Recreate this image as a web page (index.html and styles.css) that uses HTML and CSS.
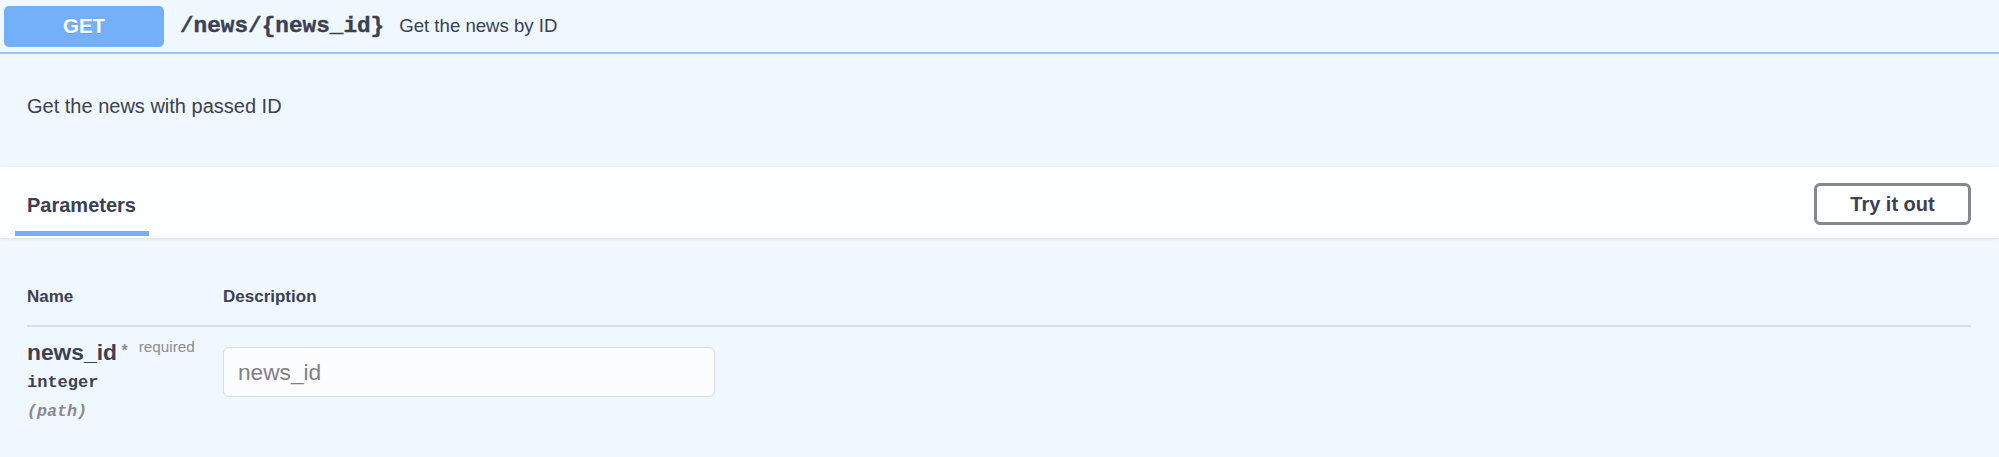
FILE: index.html
```html
<!DOCTYPE html>
<html>
<head>
<meta charset="utf-8">
<link rel="stylesheet" href="styles.css">
</head>
<body>
<div class="opblock">
  <div class="summary">
    <span class="method">GET</span>
    <span class="path">/news/{news_id}</span>
    <span class="summary-desc">Get the news by ID</span>
  </div>
  <div class="description">
    <p>Get the news with passed ID</p>
  </div>
  <div class="section-header">
    <h4 class="tab"><span class="tab-label">Parameters</span></h4>
    <button class="try-btn">Try it out</button>
  </div>
  <div class="params">
    <div class="params-table">
      <div class="th">Name</div>
      <div class="th">Description</div>
      <div class="row-line"></div>
      <div class="param-name-cell">
        <div class="param-name">news_id<span class="star">&nbsp;*</span><span class="req">required</span></div>
        <div class="param-type">integer</div>
        <div class="param-in">(path)</div>
      </div>
      <div class="param-desc-cell">
        <input class="param-input" type="text" placeholder="news_id">
      </div>
    </div>
  </div>
</div>
</body>
</html>
```

FILE: styles.css
```css
html, body {
  margin: 0;
  padding: 0;
}
body {
  background: #eff7ff;
  font-family: "Liberation Sans", Arial, sans-serif;
  color: #3b4151;
  height: 457px;
  overflow: hidden;
}
.opblock {
  background: #eff7ff;
}
.summary {
  display: flex;
  align-items: center;
  height: 52px;
  padding: 0 4px;
  border-bottom: 2px solid #9ac5f8;
}
.method {
  display: flex;
  align-items: center;
  justify-content: center;
  width: 160px;
  height: 41px;
  border-radius: 5px;
  background: #74affa;
  color: #fff;
  font-weight: bold;
  font-size: 20.4px;
  text-shadow: 0 1px 0 rgba(0, 0, 0, 0.1);
}
.path {
  margin-left: 16px;
  font-family: "Liberation Mono", "Courier New", monospace;
  font-weight: bold;
  font-size: 22.7px;
  color: #3b4151;
  -webkit-text-stroke: 0.4px #3b4151;
}
.summary-desc {
  margin-left: 15px;
  font-size: 18.6px;
  color: #3b4151;
}
.description {
  padding: 40px 27px 49px;
}
.description p {
  margin: 0;
  font-size: 20px;
  line-height: 24px;
}
.section-header {
  display: flex;
  align-items: flex-start;
  height: 71px;
  padding: 0 28px 0 27px;
  background: rgba(255, 255, 255, 0.8);
  box-shadow: 0 1px 3px rgba(0, 0, 0, 0.1);
  box-sizing: border-box;
}
.tab {
  margin: 26px 0 0;
  font-size: 20px;
  line-height: 24px;
  font-weight: bold;
}
.tab-label {
  position: relative;
}
.tab-label::after {
  content: "";
  position: absolute;
  left: -12px;
  right: -13px;
  bottom: -20px;
  height: 5px;
  background: #74affa;
}
.try-btn {
  margin: 16px 0 0 auto;
  width: 157px;
  height: 42px;
  border: 3px solid #86868b;
  border-radius: 6px;
  background: transparent;
  font-family: "Liberation Sans", Arial, sans-serif;
  font-weight: bold;
  font-size: 20px;
  color: #3b4151;
  padding: 0;
}
.params {
  padding: 0 28px 0 27px;
}
.params-table {
  display: grid;
  grid-template-columns: 196px 1fr;
}
.th {
  padding-top: 49px;
  padding-bottom: 18px;
  font-size: 17px;
  line-height: 20px;
  font-weight: bold;
}
.row-line {
  grid-column: 1 / 3;
  height: 2px;
  background: #d5dde6;
}
.param-name-cell {
  padding-top: 12px;
}
.param-name {
  font-size: 22.8px;
  line-height: 27px;
  font-weight: bold;
}
.star {
  position: relative;
  top: -4px;
  font-size: 16px;
  font-weight: bold;
  color: #8b8d94;
}
.req {
  position: relative;
  top: -8px;
  padding-left: 11px;
  font-size: 15.3px;
  font-weight: normal;
  color: #8b8d94;
}
.param-type {
  margin-top: 5px;
  font-family: "Liberation Mono", "Courier New", monospace;
  font-weight: bold;
  font-size: 17px;
  line-height: 20px;
}
.param-in {
  margin-top: 9px;
  font-family: "Liberation Mono", "Courier New", monospace;
  font-style: italic;
  font-weight: bold;
  font-size: 16.7px;
  line-height: 20px;
  color: #8a8a8a;
}
.param-desc-cell {
  padding-top: 20px;
}
.param-input {
  display: block;
  box-sizing: border-box;
  width: 492px;
  height: 50px;
  padding: 0 14px;
  border: 1.5px solid #d9dbdf;
  border-radius: 6px;
  background: #fbfcfd;
  font-family: "Liberation Sans", Arial, sans-serif;
  font-size: 22.7px;
  color: #3b4151;
  outline: none;
}
.param-input::placeholder {
  color: #808086;
}
```
